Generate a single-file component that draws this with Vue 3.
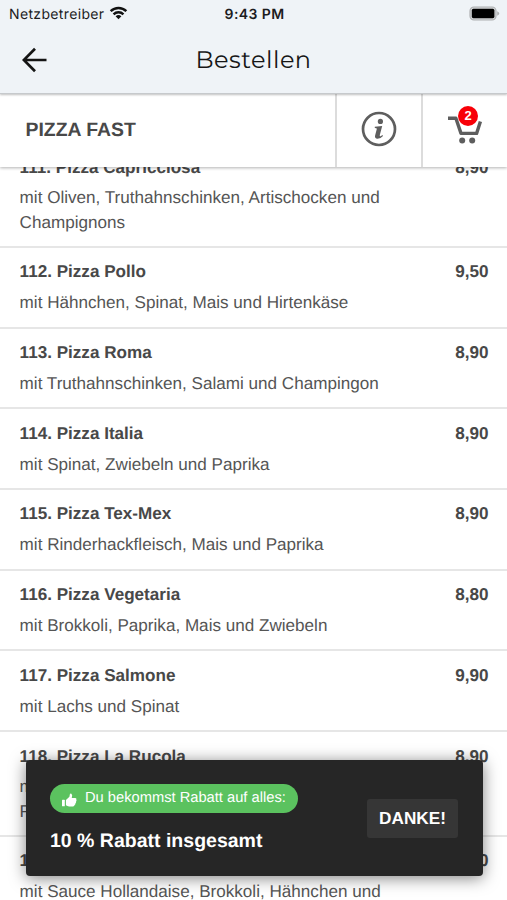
<template>
    <div class="screen">
        <header class="top-bar">
            <div class="status">
                <div class="carrier">
                    <span>Netzbetreiber</span>
                    <svg class="wifi" viewBox="0 0 20 15">
                        <path d="M1.6 5.6a12 12 0 0 1 16.8 0" />
                        <path d="M4.7 8.9a7.6 7.6 0 0 1 10.6 0" />
                        <path class="solid" d="M10 14.2 6.9 11.1a4.4 4.4 0 0 1 6.2 0z" />
                    </svg>
                </div>
                <span class="time">9:43 PM</span>
                <svg class="battery" viewBox="0 0 31 15">
                    <rect x="1" y="1" width="26" height="13" rx="4" fill="#d4d6d8" stroke="#aeb0b2" stroke-width="1.2" />
                    <rect x="2.8" y="2.8" width="22.6" height="9.4" rx="1.6" fill="#000" />
                    <path d="M28.2 5.2q2 .8 2 2.3t-2 2.3z" fill="#aeb0b2" />
                </svg>
            </div>
            <div class="nav">
                <svg class="back" viewBox="0 0 26 26">
                    <path d="M24.5 13H2.5M13 1.8 1.8 13 13 24.2" />
                </svg>
                <h1>Bestellen</h1>
            </div>
        </header>

        <div class="shop-bar">
            <div class="shop-name">PIZZA FAST</div>
            <div class="shop-action">
                <svg class="info" viewBox="0 0 36 36">
                    <circle cx="18" cy="18" r="16" fill="none" stroke="#5e5e5e" stroke-width="2.7" />
                    <circle cx="19.4" cy="10.4" r="2.6" fill="#5e5e5e" />
                    <path d="M13.8 15.7 21.2 14.9 18.8 24.1q-.3 1.6.9 1.1l1.7-1.2.6.9q-2.7 3-5.6 2.9-3-.2-2.3-3.3l1.7-6.4q.3-1.1-2-1.2z" fill="#5e5e5e" />
                </svg>
            </div>
            <div class="shop-action">
                <svg class="cart" viewBox="0 0 36 29">
                    <path d="M1 3.3H8.9L14 18.4H29.6L33.4 6.4" fill="none" stroke="#5e5e5e" stroke-width="3.4" stroke-linejoin="round" />
                    <circle cx="15.2" cy="25.6" r="3" fill="#5e5e5e" />
                    <circle cx="25.2" cy="25.6" r="3" fill="#5e5e5e" />
                </svg>
                <span class="badge">2</span>
            </div>
        </div>

        <ul class="menu">
            <li v-for="item in items" :key="item.name" class="item">
                <div class="item-head">
                    <span>{{ item.name }}</span>
                    <span>{{ item.price }}</span>
                </div>
                <p>{{ item.desc }}</p>
            </li>
        </ul>

        <div class="toast">
            <div class="toast-text">
                <div class="pill">
                    <svg class="thumb" viewBox="0 0 16 14">
                        <rect x="0" y="6.6" width="3" height="7" rx=".6" />
                        <path d="M4.2 6.9 7.9 3.5 8.4.8Q9-.2 10 .3q1.5 1 .4 4.5h3.8q1.6.3 1.1 1.9.6 1.2-.3 2 .3 1.2-.7 2 .1 1.2-.9 1.7-.1 1.3-1.7 1.4H7.5Q5.8 13.6 4.2 12.6z" />
                    </svg>
                    <span>Du bekommst Rabatt auf alles:</span>
                </div>
                <div class="discount">10 % Rabatt insgesamt</div>
            </div>
            <button class="thanks">DANKE!</button>
        </div>
    </div>
</template>

<script setup>
    const items = [
        { name: '111. Pizza Capricciosa', price: '8,90', desc: 'mit Oliven, Truthahnschinken, Artischocken und Champignons' },
        { name: '112. Pizza Pollo', price: '9,50', desc: 'mit Hähnchen, Spinat, Mais und Hirtenkäse' },
        { name: '113. Pizza Roma', price: '8,90', desc: 'mit Truthahnschinken, Salami und Champingon' },
        { name: '114. Pizza Italia', price: '8,90', desc: 'mit Spinat, Zwiebeln und Paprika' },
        { name: '115. Pizza Tex-Mex', price: '8,90', desc: 'mit Rinderhackfleisch, Mais und Paprika' },
        { name: '116. Pizza Vegetaria', price: '8,80', desc: 'mit Brokkoli, Paprika, Mais und Zwiebeln' },
        { name: '117. Pizza Salmone', price: '9,90', desc: 'mit Lachs und Spinat' },
        { name: '118. Pizza La Rucola', price: '8,90', desc: 'mit Tomaten, Rucola, Parmaschinken und Frischkäse' },
        { name: '119.', price: '8,90', desc: 'mit Sauce Hollandaise, Brokkoli, Hähnchen und' },
    ];
</script>

<style>
    body {
        margin: 0;
        background: #fff;
    }
</style>

<style scoped>
    .screen {
        position: relative;
        width: 507px;
        height: 900px;
        overflow: hidden;
        background: #fff;
        color: #484848;
        font-family: "Liberation Sans", Arial, sans-serif;
        text-rendering: geometricPrecision;
    }

    .top-bar {
        position: relative;
        z-index: 3;
        box-sizing: border-box;
        height: 94px;
        background: #eff3f7;
        border-bottom: 1px solid #c6c9cc;
        box-shadow: 0 1px 2px rgba(0, 0, 0, 0.25);
    }

    .status {
        display: grid;
        grid-template-columns: 1fr auto 1fr;
        align-items: center;
        height: 28px;
        padding: 0 7px 0 9px;
        color: #1c1c1e;
        font-family: Inter, sans-serif;
        font-size: 14px;
    }

    .carrier {
        display: flex;
        align-items: center;
        gap: 5px;
        letter-spacing: 0.35px;
    }

    .wifi {
        width: 19px;
        height: 14px;
        margin-top: -2px;
        fill: none;
        stroke: #111;
        stroke-width: 2.6;
    }

    .wifi .solid {
        fill: #111;
        stroke: none;
    }

    .time {
        font-weight: 600;
        letter-spacing: 0.4px;
    }

    .battery {
        justify-self: end;
        width: 31px;
        height: 15px;
        margin-top: -2px;
    }

    .nav {
        display: grid;
        grid-template-columns: 60px 1fr 60px;
        align-items: center;
        height: 64px;
    }

    .back {
        width: 26px;
        height: 26px;
        margin-left: 22px;
        fill: none;
        stroke: #141414;
        stroke-width: 2.7;
    }

    h1 {
        margin: 0;
        color: #161616;
        font-family: Montserrat, Inter, sans-serif;
        font-size: 24px;
        font-weight: 400;
        letter-spacing: 0.5px;
        text-align: center;
    }

    .shop-bar {
        position: relative;
        z-index: 2;
        display: flex;
        height: 73px;
        background: #fff;
        box-shadow: 0 1px 3px rgba(0, 0, 0, 0.3);
    }

    .shop-name {
        flex: 1;
        padding-left: 25.5px;
        font-size: 19.4px;
        font-weight: bold;
        line-height: 72px;
    }

    .shop-action {
        position: relative;
        display: flex;
        align-items: center;
        justify-content: center;
        width: 84px;
        border-left: 2px solid #dcdcdc;
    }

    .info {
        width: 36px;
        height: 36px;
        margin-bottom: 3px;
    }

    .cart {
        width: 36px;
        height: 29px;
        margin-bottom: 3px;
    }

    .badge {
        position: absolute;
        top: 12px;
        left: 35px;
        width: 20px;
        height: 20px;
        border-radius: 50%;
        background: #f80008;
        color: #fff;
        font-size: 13px;
        font-weight: bold;
        line-height: 20px;
        text-align: center;
    }

    .menu {
        margin: -24px 0 0;
        padding: 0;
        list-style: none;
    }

    .item {
        padding: 12.5px 18.5px 10.9px 19.6px;
        border-bottom: 2px solid #e6e6e6;
        font-size: 17.1px;
        line-height: 24.3px;
    }

    .item-head {
        display: flex;
        justify-content: space-between;
        margin-bottom: 6.7px;
        font-weight: bold;
    }

    .item p {
        width: 380px;
        margin: 0;
        color: #555;
    }

    .toast {
        position: absolute;
        z-index: 4;
        top: 760px;
        left: 26px;
        display: flex;
        align-items: center;
        justify-content: space-between;
        box-sizing: border-box;
        width: 457px;
        height: 116px;
        padding: 0 25px 0 24px;
        border-radius: 4px;
        background: #262626;
        box-shadow: 0 2px 16px rgba(0, 0, 0, 0.5);
        color: #fff;
    }

    .pill {
        display: flex;
        align-items: center;
        gap: 8px;
        box-sizing: border-box;
        width: 248px;
        height: 29px;
        padding-left: 12px;
        border-radius: 15px;
        background: #5bc25f;
        font-size: 14.7px;
        line-height: 29px;
        white-space: nowrap;
    }

    .thumb {
        flex: none;
        width: 15px;
        height: 14px;
        margin-top: 4px;
        fill: #fff;
    }

    .discount {
        margin-top: 16px;
        font-size: 19.5px;
        font-weight: bold;
        line-height: 24px;
        white-space: nowrap;
    }

    .thanks {
        width: 91px;
        height: 39px;
        padding: 0;
        border: 0;
        border-radius: 3px;
        background: #363636;
        color: #fff;
        font-family: inherit;
        font-size: 17.2px;
        font-weight: bold;
    }
</style>
